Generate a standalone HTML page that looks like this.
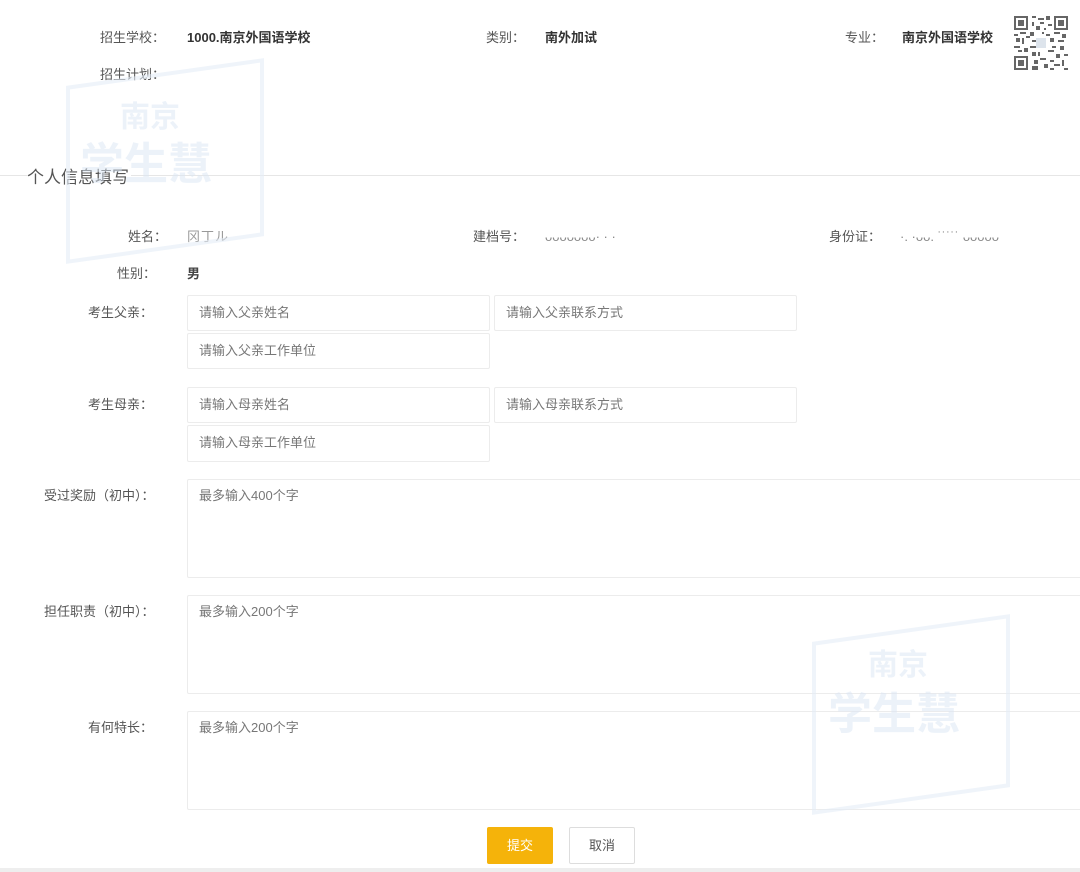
<!DOCTYPE html>
<html><head><meta charset="utf-8"><style>
html,body{margin:0;padding:0;background:#fff;width:1080px;height:872px;overflow:hidden;position:relative;font-family:"Liberation Sans","Noto Sans CJK SC",sans-serif;font-size:13px;color:#555}
.a{position:absolute;white-space:nowrap;line-height:16px}
.b{font-weight:bold;color:#333}
.in{position:absolute;border:1px solid #ececec;border-radius:2px;box-sizing:border-box;background:#fff;color:#777;padding-left:11px;line-height:34px;font-size:13px}
.ta{position:absolute;border:1px solid #ececec;border-radius:2px;box-sizing:border-box;background:#fff;color:#777;padding:8px 11px;font-size:13px;line-height:16px}
.wm{position:absolute;font-weight:bold;color:#dbe6f4;opacity:.5;pointer-events:none}
.wb{position:absolute;border:4px solid #e4ecf6;transform:skewY(-8deg);opacity:.6;pointer-events:none}
</style></head><body>

<div class="a" style="left:100px;top:30px">招生学校：</div>
<div class="a b" style="left:187px;top:30px">1000.南京外国语学校</div>
<div class="a" style="left:486px;top:30px">类别：</div>
<div class="a b" style="left:545px;top:30px">南外加试</div>
<div class="a" style="left:845px;top:30px">专业：</div>
<div class="a b" style="left:902px;top:30px">南京外国语学校</div>
<svg style="position:absolute;left:1014px;top:16px" width="54" height="54" viewBox="0 0 27 27">
<rect width="27" height="27" fill="#fff"/>
<g fill="#666">
<path d="M0 0h7v7h-7zM1 1v5h5v-5zM2 2h3v3h-3z" fill-rule="evenodd"/>
<path d="M20 0h7v7h-7zM21 1v5h5v-5zM22 2h3v3h-3z" fill-rule="evenodd"/>
<path d="M0 20h7v7h-7zM1 21v5h5v-5zM2 22h3v3h-3z" fill-rule="evenodd"/>
<path d="M9 0h2v1h-2zM12 1h3v1h-3zM9 3h1v2h-1zM13 3h2v1h-2zM16 0h2v2h-2zM17 4h2v1h-2zM11 5h2v2h-2zM15 6h1v1h-1zM0 9h2v1h-2zM3 8h3v1h-3zM1 11h2v2h-2zM4 11h1v3h-1zM6 10h2v1h-2zM0 15h3v1h-3zM5 16h2v2h-2zM2 17h2v1h-2zM8 8h2v2h-2zM9 12h2v1h-2zM8 15h3v1h-3zM9 18h2v2h-2zM16 9h2v1h-2zM18 11h2v2h-2zM20 8h3v1h-3zM24 9h2v2h-2zM22 12h3v1h-3zM19 15h2v1h-2zM23 15h2v2h-2zM17 17h3v1h-3zM21 19h2v2h-2zM25 19h2v1h-2zM10 22h2v2h-2zM13 21h3v1h-3zM9 25h3v2h-3zM15 24h2v2h-2zM18 22h2v1h-2zM20 24h3v1h-3zM24 22h1v3h-1zM18 26h2v1h-2zM25 26h2v1h-2zM12 18h1v2h-1zM14 8h1v1h-1z"/>
</g>
<rect x="11" y="11" width="5" height="5" fill="#dde4ec"/>
</svg>
<div class="a" style="left:100px;top:67px">招生计划：</div>

<div style="position:absolute;left:0;top:175px;width:1080px;height:1px;background:#e6e6e6"></div>
<div class="a" style="left:27px;top:168px;font-size:17px;line-height:20px;color:#555;background:#fff;padding-right:2px">个人信息填写</div>

<div class="a" style="left:128px;top:229px">姓名：</div>
<div class="a" style="left:187px;top:229px;color:#999;letter-spacing:1px">冈丁ル</div>
<div class="a" style="left:473px;top:229px">建档号：</div>
<div class="a" style="left:545px;top:229px;color:#888">ᴗᴗᴗᴗᴗᴗᴗ· · ·</div>
<div class="a" style="left:829px;top:229px">身份证：</div>
<div class="a" style="left:900px;top:229px;color:#888">·. ·ᴗᴗ. ˙˙˙˙˙ ᴗᴗᴗᴗᴗ</div>
<div class="a" style="left:117px;top:266px">性别：</div>
<div class="a b" style="left:187px;top:266px;color:#444">男</div>

<div class="a" style="left:88px;top:305px">考生父亲：</div>
<div class="in" style="left:187px;top:295px;width:303px;height:36px">请输入父亲姓名</div>
<div class="in" style="left:494px;top:295px;width:303px;height:36px">请输入父亲联系方式</div>
<div class="in" style="left:187px;top:333px;width:303px;height:36px">请输入父亲工作单位</div>

<div class="a" style="left:88px;top:397px">考生母亲：</div>
<div class="in" style="left:187px;top:387px;width:303px;height:36px">请输入母亲姓名</div>
<div class="in" style="left:494px;top:387px;width:303px;height:36px">请输入母亲联系方式</div>
<div class="in" style="left:187px;top:425px;width:303px;height:37px">请输入母亲工作单位</div>

<div class="a" style="left:44px;top:488px">受过奖励（初中）：</div>
<div class="ta" style="left:187px;top:479px;width:900px;height:99px">最多输入400个字</div>
<div class="a" style="left:44px;top:604px">担任职责（初中）：</div>
<div class="ta" style="left:187px;top:595px;width:900px;height:99px">最多输入200个字</div>
<div class="a" style="left:88px;top:720px">有何特长：</div>
<div class="ta" style="left:187px;top:711px;width:900px;height:99px">最多输入200个字</div>

<div style="position:absolute;left:487px;top:827px;width:66px;height:37px;background:#f5b30a;border-radius:2px;color:#fff;text-align:center;line-height:37px">提交</div>
<div style="position:absolute;left:569px;top:827px;width:66px;height:37px;box-sizing:border-box;border:1px solid #ddd;border-radius:2px;color:#555;text-align:center;line-height:35px">取消</div>
<div style="position:absolute;left:0;top:868px;width:1080px;height:4px;background:#eee"></div>

<!-- watermarks on top -->
<div class="wb" style="left:66px;top:72px;width:190px;height:170px"></div>
<div class="wm" style="left:120px;top:92px;font-size:30px">南京</div>
<div class="wm" style="left:80px;top:128px;font-size:44px">学生慧</div>
<div class="wb" style="left:812px;top:628px;width:190px;height:165px"></div>
<div class="wm" style="left:868px;top:640px;font-size:30px">南京</div>
<div class="wm" style="left:828px;top:678px;font-size:44px">学生慧</div>
</body></html>
